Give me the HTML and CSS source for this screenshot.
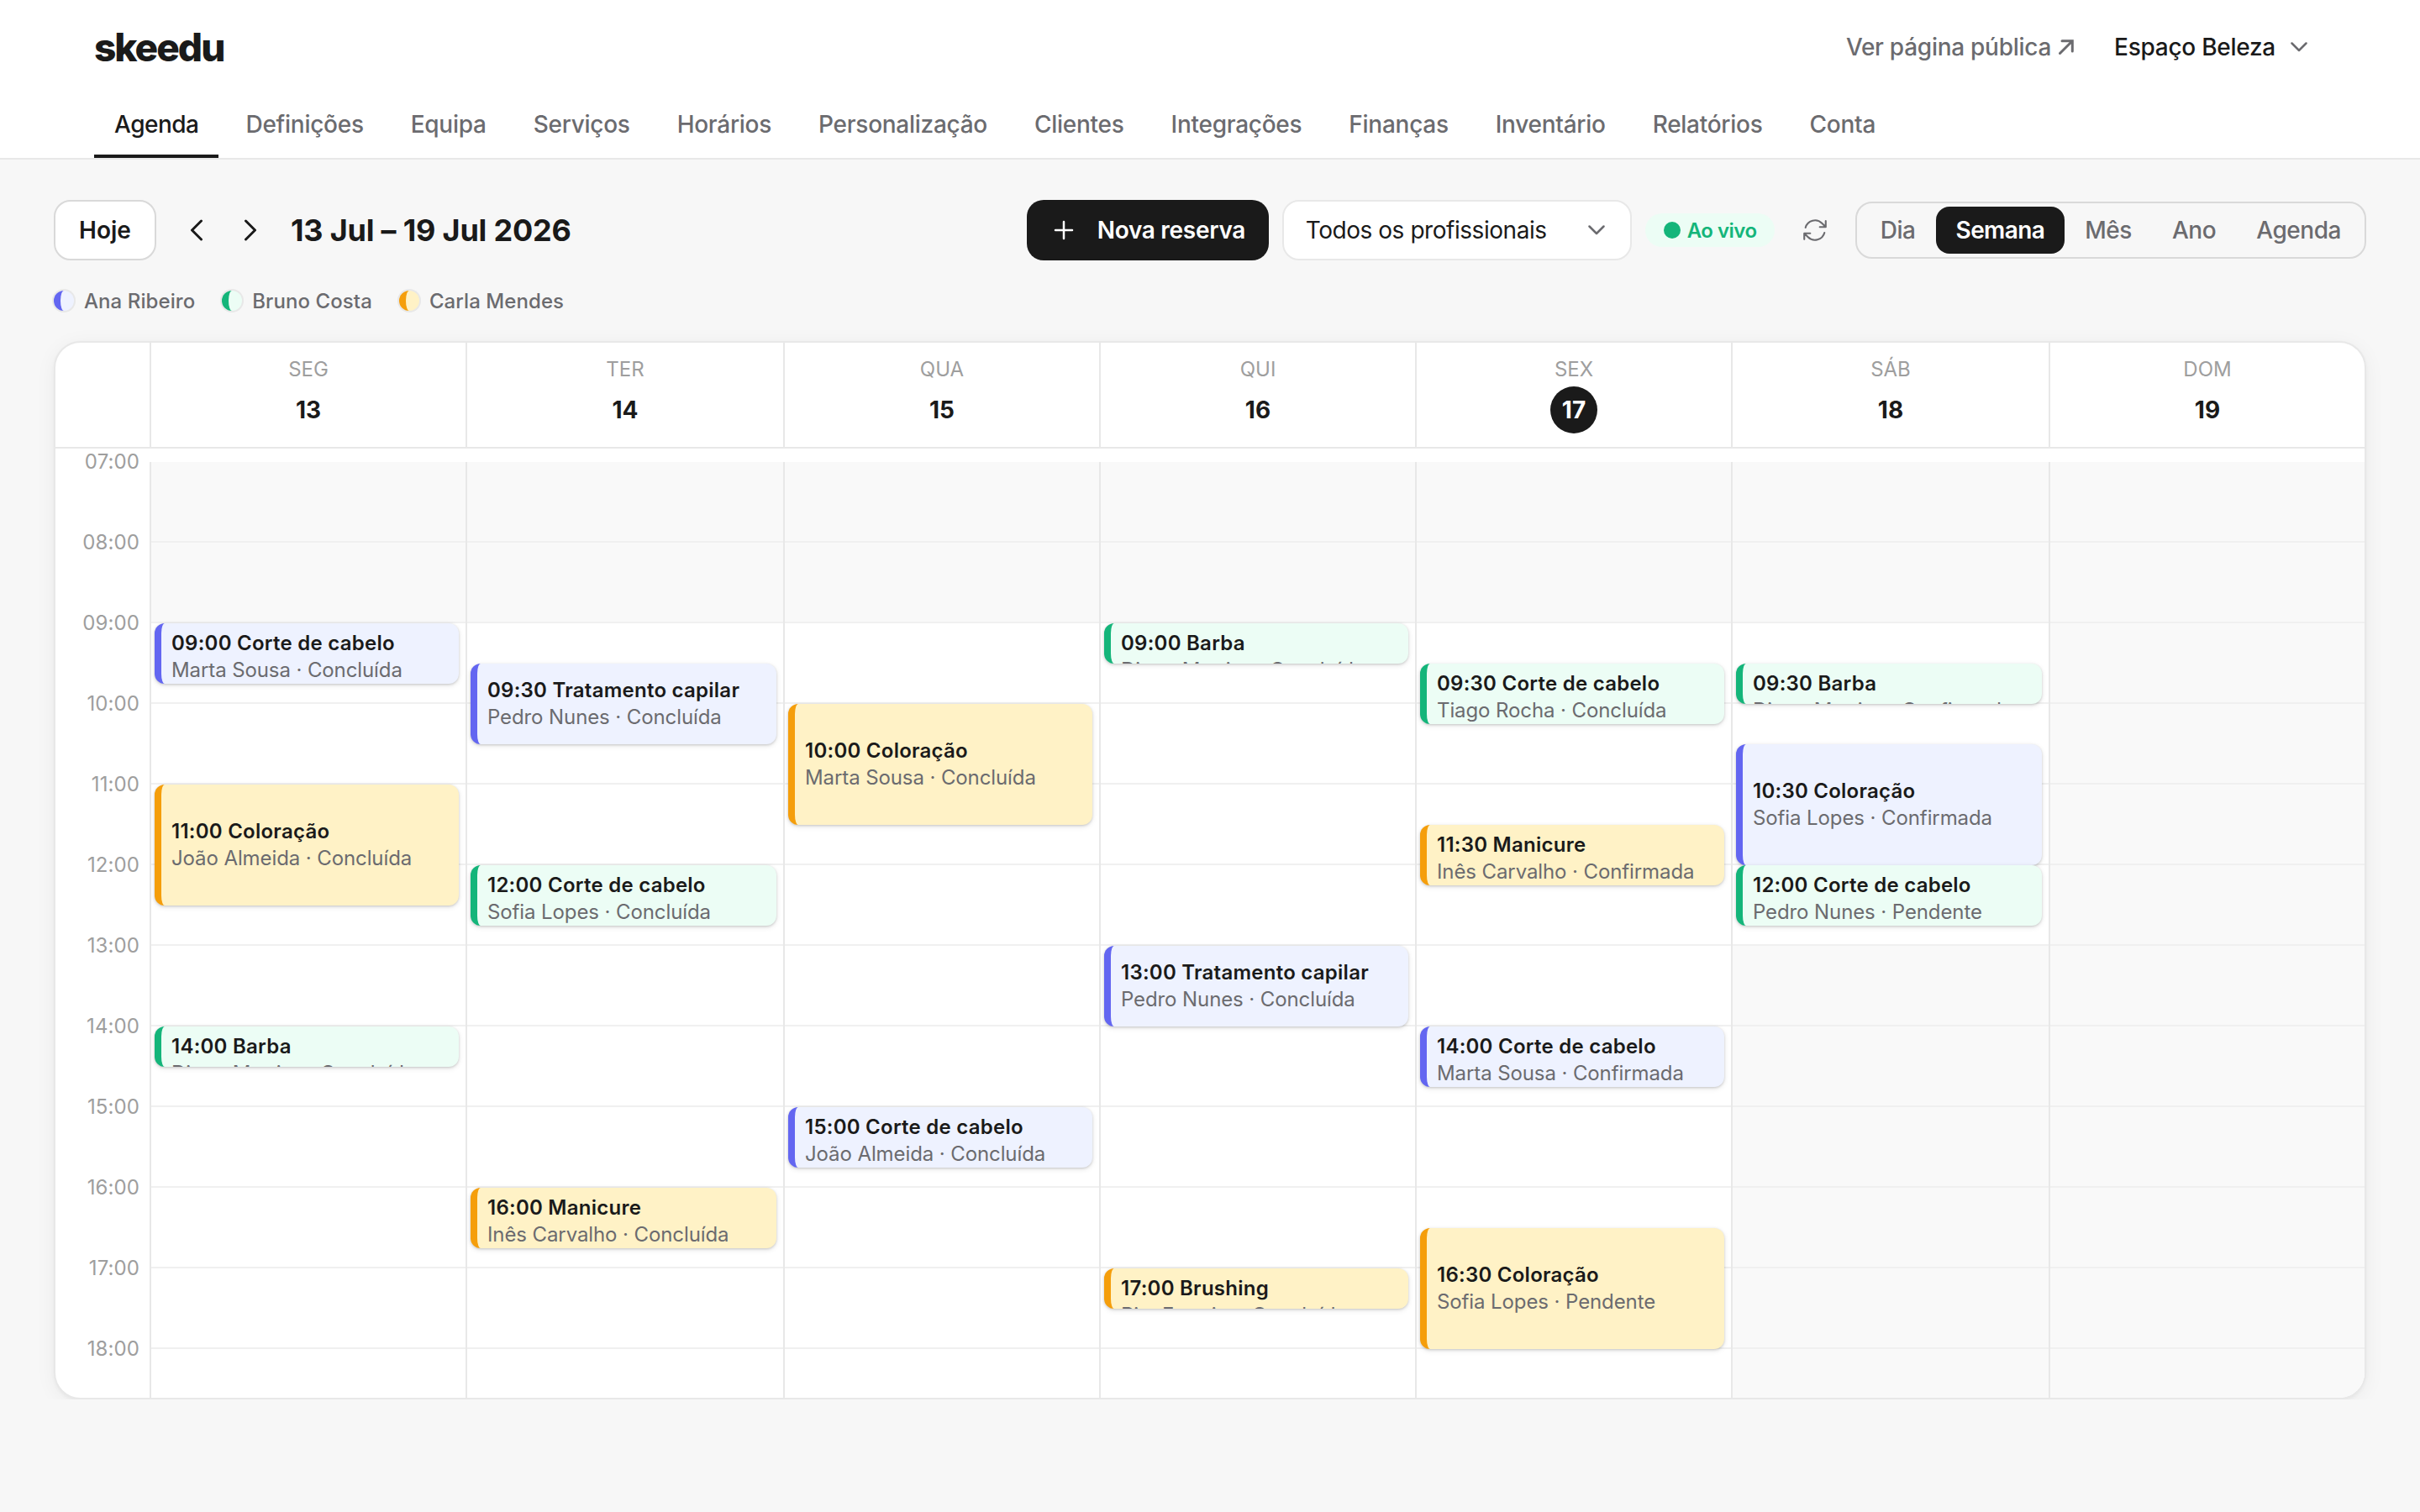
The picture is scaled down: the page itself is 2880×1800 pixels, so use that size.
FILE: index.html
```html
<!DOCTYPE html>
<html lang="pt">
<head>
    <meta charset="UTF-8">
    <meta name="viewport" content="width=device-width, initial-scale=1.0">
    <title>skeedu - Agenda</title>
    <link rel="stylesheet" href="styles.css">
</head>
<body>
    <header class="header">
        <div class="topbar">
            <div class="logo">skeedu</div>
            <div class="account">
                <a class="public-link">Ver página pública
                    <svg width="18" height="18" viewBox="0 0 18 18"><path d="M1.500 16.500 16 2M4 1.700h12.300V14"/></svg>
                </a>
                <button class="account-btn">Espaço Beleza
                    <svg width="20" height="12" viewBox="0 0 20 12"><path d="m1.500 1.500 8.500 8.500 8.500-8.500"/></svg>
                </button>
            </div>
        </div>
        <nav class="nav">
            <a class="active">Agenda</a>
            <a>Definições</a>
            <a>Equipa</a>
            <a>Serviços</a>
            <a>Horários</a>
            <a>Personalização</a>
            <a>Clientes</a>
            <a>Integrações</a>
            <a>Finanças</a>
            <a>Inventário</a>
            <a>Relatórios</a>
            <a>Conta</a>
        </nav>
    </header>

    <main>
        <div class="toolbar">
            <button class="today-btn">Hoje</button>
            <button class="arrow-btn prev"><svg width="16" height="26" viewBox="0 0 16 26"><path d="M13.500 2 2.500 13l11 11"/></svg></button>
            <button class="arrow-btn next"><svg width="16" height="26" viewBox="0 0 16 26"><path d="m2.500 2 11 11-11 11"/></svg></button>
            <h1>13 Jul – 19 Jul 2026</h1>
            <div class="spacer"></div>
            <button class="new-btn"><svg width="24" height="24" viewBox="0 0 24 24"><path d="M12 2v20M2 12h20"/></svg>Nova reserva</button>
            <button class="select">Todos os profissionais
                <svg width="20" height="12" viewBox="0 0 20 12"><path d="m1.500 1.500 8.500 8.500 8.500-8.500"/></svg>
            </button>
            <span class="live"><i></i>Ao vivo</span>
            <button class="refresh"><svg width="34" height="34" viewBox="0 0 24 24"><path d="M16.023 9.348h4.992V4.356M2.985 19.644v-4.992h4.992m-4.993 0 3.181 3.183a8.250 8.250 0 0 0 13.803-3.700M4.031 9.865a8.250 8.250 0 0 1 13.803-3.700l3.181 3.182"/></svg></button>
            <div class="views">
                <button>Dia</button>
                <button class="active">Semana</button>
                <button>Mês</button>
                <button>Ano</button>
                <button>Agenda</button>
            </div>
        </div>

        <div class="legend">
            <span><i class="indigo"></i>Ana Ribeiro</span>
            <span><i class="green"></i>Bruno Costa</span>
            <span><i class="amber"></i>Carla Mendes</span>
        </div>

        <div class="calendar">
            <div class="calendar-header" id="calendarHeader">
                <div></div>
            </div>
            <div class="calendar-body" id="calendarBody">
                <div class="hours" id="hours"></div>
            </div>
        </div>
    </main>

    <script src="script.js"></script>
</body>
</html>
```
FILE: styles.css
```css
* {
    box-sizing: border-box;
}

body {
    margin: 0;
    font-family: Inter, "Liberation Sans", sans-serif;
    font-size: 28px;
    color: #1a1a1a;
    background-color: #f7f7f7;
}

button {
    font: inherit;
    letter-spacing: inherit;
    color: inherit;
    background: none;
    border: none;
    padding: 0;
    white-space: nowrap;
}

svg {
    display: block;
    fill: none;
    stroke: currentColor;
    stroke-width: 3;
    stroke-linecap: round;
    stroke-linejoin: round;
}

/* Header */
.header {
    height: 190px;
    padding: 0 112px;
    background-color: #fff;
    border-bottom: 2px solid #e8e8e8;
    letter-spacing: -0.27px;
}

.topbar {
    height: 112px;
    display: flex;
    justify-content: space-between;
    align-items: center;
}

.logo {
    font-size: 46px;
    font-weight: 800;
    letter-spacing: -2px;
}

.account {
    display: flex;
    align-items: center;
    gap: 48px;
    padding-right: 22px;
    font-weight: 500;
}

.public-link {
    display: flex;
    align-items: center;
    gap: 9px;
    color: #6b6b6f;
}

.public-link svg {
    stroke-linejoin: miter;
}

.account-btn {
    display: flex;
    align-items: center;
    gap: 18px;
}

.account-btn svg,
.select svg {
    stroke: #6b6b6f;
    stroke-width: 2.5;
}

.nav {
    display: flex;
    gap: 8px;
    height: 76px;
}

.nav a {
    padding: 0 24px;
    line-height: 72px;
    font-weight: 500;
    color: #6b6b6f;
    border-bottom: 4px solid transparent;
}

.nav a.active {
    letter-spacing: -0.5px;
    color: #1a1a1a;
    border-color: #1a1a1a;
}

/* Toolbar */
main {
    padding: 48px 64px 0;
}

.toolbar {
    display: flex;
    align-items: center;
    height: 72px;
}

.today-btn {
    width: 122px;
    height: 72px;
    font-weight: 600;
    background-color: #fff;
    border: 2px solid #d9d9d9;
    border-radius: 20px;
}

.arrow-btn {
    width: 64px;
    height: 64px;
    display: flex;
    justify-content: center;
    align-items: center;
}

.prev {
    margin-left: 16px;
}

h1 {
    margin: 0 0 0 16px;
    font-size: 36px;
    font-weight: 700;
    letter-spacing: -0.2px;
}

.spacer {
    flex: 1;
}

.new-btn {
    display: flex;
    align-items: center;
    gap: 28px;
    width: 288px;
    height: 72px;
    padding-left: 32px;
    font-weight: 600;
    letter-spacing: -0.3px;
    color: #fff;
    background-color: #1a1a1a;
    border-radius: 20px;
}

.new-btn svg {
    stroke-width: 2.5;
}

.select {
    display: flex;
    align-items: center;
    justify-content: space-between;
    width: 416px;
    height: 72px;
    margin-left: 16px;
    padding: 0 30px 0 26px;
    letter-spacing: -0.45px;
    background-color: #fff;
    border: 2px solid #e8e8e8;
    border-radius: 20px;
}

.live {
    display: flex;
    align-items: center;
    gap: 8px;
    width: 154px;
    height: 40px;
    margin-left: 16px;
    padding: 0 20px 0 22px;
    border-radius: 20px;
    font-size: 24px;
    font-weight: 600;
    letter-spacing: -0.5px;
    color: #14b57a;
    background-color: #ecfdf5;
}

.live i {
    width: 20px;
    height: 20px;
    border-radius: 50%;
    background-color: #14b57a;
}

.refresh {
    margin: 0 31px;
    color: #6b6b6f;
}

.refresh svg {
    stroke-width: 1.5;
}

.views {
    display: flex;
    padding: 4px;
    border: 2px solid #d9d9d9;
    border-radius: 20px;
    letter-spacing: -0.45px;
}

.views button {
    height: 56px;
    padding: 0 24px;
    font-weight: 500;
    color: #6b6b6f;
    border-radius: 16px;
}

.views .active {
    font-weight: 600;
    letter-spacing: -0.6px;
    color: #fff;
    background-color: #1a1a1a;
}

/* Legend */
.legend {
    display: flex;
    gap: 32px;
    height: 40px;
    margin-top: 28px;
    font-size: 24px;
    font-weight: 500;
    letter-spacing: 0.08px;
    color: #6b6b6f;
}

.legend span {
    display: flex;
    align-items: center;
    gap: 12px;
}

.legend i {
    width: 24px;
    height: 24px;
    border-radius: 50%;
    border-left-width: 8px;
    border-left-style: solid;
    box-shadow: 0 0 0 2px #e8e8e8;
}

/* Calendar */
.calendar {
    height: 1260px;
    margin-top: 28px;
    overflow: hidden;
    background-color: #fff;
    border: 2px solid #e8e8e8;
    border-radius: 32px;
    box-shadow: 0 2px 4px rgba(0, 0, 0, 0.04), 0 4px 24px rgba(0, 0, 0, 0.05);
}

.calendar-header,
.calendar-body {
    display: grid;
    grid-template-columns: 112px 376px 378px 376px 376px 376px 378px 1fr;
}

.calendar-header {
    height: 126px;
    border-bottom: 2px solid #e8e8e8;
}

.day-head {
    display: flex;
    flex-direction: column;
    align-items: center;
    padding-top: 16px;
    border-left: 2px solid #e8e8e8;
}

.day-head span {
    line-height: 32px;
    font-size: 24px;
    color: #9e9e9e;
}

.day-head b {
    width: 56px;
    height: 56px;
    margin-top: 4px;
    border-radius: 50%;
    line-height: 56px;
    text-align: center;
    font-weight: 700;
}

.day-head .today {
    color: #fff;
    background-color: #1a1a1a;
}

.calendar-body {
    padding-top: 16px;
}

.hours {
    margin-top: -16px;
    height: 1130px;
}

.hours div {
    height: 96px;
    padding-right: 12px;
    line-height: 32px;
    text-align: right;
    font-size: 24px;
    letter-spacing: 0.1px;
    color: #9e9e9e;
}

.day {
    position: relative;
    height: 1114px;
    border-left: 2px solid #e8e8e8;
}

.slot {
    height: 96px;
    border-bottom: 2px solid #f0f0f0;
}

.slot.closed {
    background-color: #f9f9f9;
}

.event {
    position: absolute;
    left: 4px;
    right: 8px;
    display: flex;
    flex-direction: column;
    justify-content: safe center;
    overflow: hidden;
    padding: 8px 12px;
    border-left-width: 8px;
    border-left-style: solid;
    border-radius: 12px;
    box-shadow: 0 2px 6px rgba(0, 0, 0, 0.1), 0 1px 3px rgba(0, 0, 0, 0.16);
    font-size: 24px;
    line-height: 32px;
    white-space: nowrap;
}

.event b,
.event span {
    flex-shrink: 0;
}

.event b {
    font-weight: 600;
    letter-spacing: 0.25px;
    color: #1a1a1a;
}

.event span {
    letter-spacing: -0.1px;
    color: #6b6b6f;
}

/* Staff colors */
.indigo {
    background-color: #eef2ff;
    border-color: #6366f1;
}

.green {
    background-color: #ecfdf5;
    border-color: #14b57a;
}

.amber {
    background-color: #fff2c6;
    border-color: #f59e0b;
}
```
FILE: script.js
```js
const HOUR_HEIGHT = 96;
const START_HOUR = 7;

// open / close hours of each day, null when the day is closed
const days = [
    { name: "SEG", date: 13, open: [9, 19] },
    { name: "TER", date: 14, open: [9, 19] },
    { name: "QUA", date: 15, open: [9, 19] },
    { name: "QUI", date: 16, open: [9, 19] },
    { name: "SEX", date: 17, open: [9, 19], today: true },
    { name: "SÁB", date: 18, open: [9, 13] },
    { name: "DOM", date: 19, open: null }
];

// [day, start, minutes, service, client, status, color]
const events = [
    [0, "09:00", 45, "Corte de cabelo", "Marta Sousa", "Concluída", "indigo"],
    [0, "11:00", 90, "Coloração", "João Almeida", "Concluída", "amber"],
    [0, "14:00", 30, "Barba", "Diogo Martins", "Concluída", "green"],
    [1, "09:30", 60, "Tratamento capilar", "Pedro Nunes", "Concluída", "indigo"],
    [1, "12:00", 45, "Corte de cabelo", "Sofia Lopes", "Concluída", "green"],
    [1, "16:00", 45, "Manicure", "Inês Carvalho", "Concluída", "amber"],
    [2, "10:00", 90, "Coloração", "Marta Sousa", "Concluída", "amber"],
    [2, "15:00", 45, "Corte de cabelo", "João Almeida", "Concluída", "indigo"],
    [3, "09:00", 30, "Barba", "Diogo Martins", "Concluída", "green"],
    [3, "13:00", 60, "Tratamento capilar", "Pedro Nunes", "Concluída", "indigo"],
    [3, "17:00", 30, "Brushing", "Rita Ferreira", "Concluída", "amber"],
    [4, "09:30", 45, "Corte de cabelo", "Tiago Rocha", "Concluída", "green"],
    [4, "11:30", 45, "Manicure", "Inês Carvalho", "Confirmada", "amber"],
    [4, "14:00", 45, "Corte de cabelo", "Marta Sousa", "Confirmada", "indigo"],
    [4, "16:30", 90, "Coloração", "Sofia Lopes", "Pendente", "amber"],
    [5, "09:30", 30, "Barba", "Diogo Martins", "Confirmada", "green"],
    [5, "10:30", 90, "Coloração", "Sofia Lopes", "Confirmada", "indigo"],
    [5, "12:00", 45, "Corte de cabelo", "Pedro Nunes", "Pendente", "green"]
];

const header = document.getElementById("calendarHeader");
const body = document.getElementById("calendarBody");
const hours = document.getElementById("hours");

for (let h = START_HOUR; h <= 18; h++) {
    hours.innerHTML += `<div>${String(h).padStart(2, "0")}:00</div>`;
}

days.forEach((day, index) => {
    header.innerHTML += `<div class="day-head"><span>${day.name}</span><b class="${day.today ? "today" : ""}">${day.date}</b></div>`;

    const column = document.createElement("div");
    column.className = "day";

    for (let h = START_HOUR; h <= 18; h++) {
        const closed = !day.open || h < day.open[0] || h >= day.open[1];
        column.innerHTML += `<div class="slot${closed ? " closed" : ""}"></div>`;
    }

    events.filter(e => e[0] === index).forEach(([, start, minutes, service, client, status, color]) => {
        const [h, m] = start.split(":").map(Number);
        const top = (h - START_HOUR + m / 60) * HOUR_HEIGHT;
        const height = minutes / 60 * HOUR_HEIGHT;
        column.innerHTML += `<div class="event ${color}" style="top: ${top}px; height: ${height}px"><b>${start} ${service}</b><span>${client} · ${status}</span></div>`;
    });

    body.appendChild(column);
});
```
